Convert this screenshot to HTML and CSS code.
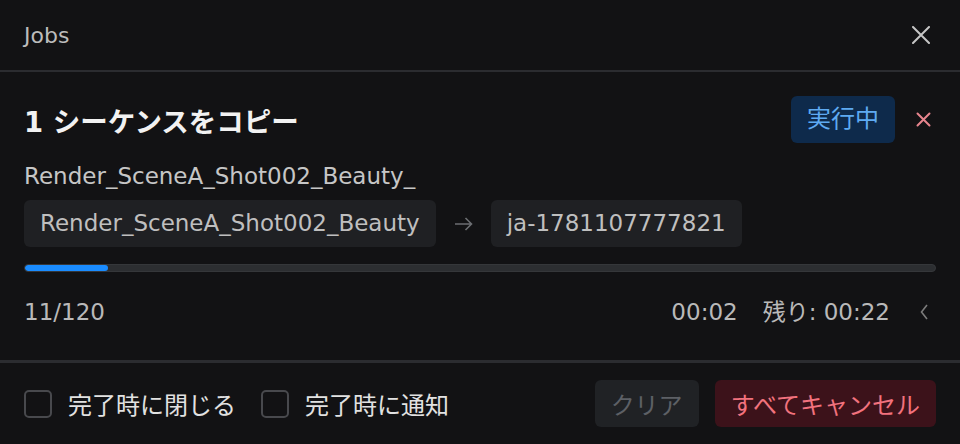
FILE: index.html
```html
<!DOCTYPE html>
<html lang="ja">
<head>
	<meta charset="UTF-8">
	<title>Jobs</title>
	<link rel="stylesheet" href="styles.css">
</head>
<body>
<div class="panel">
	<header class="head">
		<span class="head-title">Jobs</span>
		<button class="icon-btn close-btn">
			<svg width="18" height="18" viewBox="0 0 18 18"><path d="M1 1L17 17M17 1L1 17" stroke="currentColor" stroke-width="2" fill="none" stroke-linecap="round"/></svg>
		</button>
	</header>
	<section class="job">
		<div class="job-top">
			<h2 class="job-title">1 シーケンスをコピー</h2>
			<div class="job-status">
				<span class="badge">実行中</span>
				<button class="icon-btn cancel-btn">
					<svg width="15" height="15" viewBox="0 0 15 15"><path d="M1.5 1.5L13.5 13.5M13.5 1.5L1.5 13.5" stroke="currentColor" stroke-width="2" fill="none" stroke-linecap="round"/></svg>
				</button>
			</div>
		</div>
		<div class="job-name">Render_SceneA_Shot002_Beauty_</div>
		<div class="rename">
			<span class="chip">Render_SceneA_Shot002_Beauty</span>
			<svg class="arrow" width="19" height="14" viewBox="0 0 19 14"><path d="M1 7H17.5M11.5 1L17.5 7L11.5 13" stroke="currentColor" stroke-width="1.6" fill="none"/></svg>
			<span class="chip">ja-1781107777821</span>
		</div>
		<div class="progress"><div class="progress-fill" style="width: 9.17%"></div></div>
		<div class="stats">
			<span>11/120</span>
			<div class="times">
				<span>00:02</span>
				<span>残り: 00:22</span>
				<svg class="chevron" width="8" height="16" viewBox="0 0 8 16"><path d="M7 1L1.5 8L7 15" stroke="currentColor" stroke-width="1.6" fill="none"/></svg>
			</div>
		</div>
	</section>
	<footer class="foot">
		<div class="opts">
			<label class="opt"><span class="box"></span>完了時に閉じる</label>
			<label class="opt"><span class="box"></span>完了時に通知</label>
		</div>
		<div class="actions">
			<button class="btn btn-clear">クリア</button>
			<button class="btn btn-danger">すべてキャンセル</button>
		</div>
	</footer>
</div>
</body>
</html>
```
FILE: styles.css
```css
*{
	margin: 0;
	padding: 0;
	box-sizing: border-box;
}
body{
	background: #121214;
	font-family: "DejaVu Sans", "Noto Sans CJK JP", sans-serif;
	font-size: 23px;
	color: #c4c4c4;
}
button{
	font-family: inherit;
	font-size: inherit;
	border: none;
	background: none;
	cursor: pointer;
}
.panel{
	width: 960px;
	height: 444px;
}

/* header */
.head{
	height: 72px;
	padding: 0 30px 0 24px;
	display: flex;
	align-items: center;
	justify-content: space-between;
	border-bottom: 2px solid #2b2c30;
}
.head-title{
	font-size: 22px;
	color: #bcbcbc;
}
.icon-btn{
	display: flex;
	align-items: center;
	justify-content: center;
}
.close-btn{
	color: #c6c6c6;
}
.cancel-btn{
	color: #e7858e;
}

/* job card */
.job{
	padding: 24px 24px 31px;
	border-bottom: 3px solid #2b2c30;
}
.job-top{
	display: flex;
	align-items: center;
	justify-content: space-between;
}
.job-title{
	font-size: 27.5px;
	font-weight: bold;
	color: #f2f2f2;
}
.job-status{
	display: flex;
	align-items: center;
	gap: 21px;
	padding-right: 5px;
}
.badge{
	height: 47px;
	line-height: 47px;
	padding: 0 16px;
	border-radius: 6px;
	background: #0e2a4b;
	color: #5eaaf2;
	font-size: 24px;
}
.job-name{
	margin-top: 16px;
	line-height: 34px;
	color: #c6c6c6;
}
.rename{
	margin-top: 7px;
	display: flex;
	align-items: center;
	gap: 18px;
}
.chip{
	height: 47px;
	line-height: 47px;
	padding: 0 16px;
	border-radius: 6px;
	background: #1f2023;
	color: #bfbfbf;
}
.arrow{
	color: #6c6e72;
}
.progress{
	margin-top: 17px;
	height: 8px;
	border-radius: 4px;
	background: #2c2e31;
	border: 1px solid #35373a;
	overflow: hidden;
}
.progress-fill{
	height: 100%;
	background: #1a8cff;
	border-radius: 4px;
}
.stats{
	margin-top: 23px;
	line-height: 34px;
	display: flex;
	justify-content: space-between;
	align-items: center;
	color: #b9b9b9;
}
.times{
	display: flex;
	align-items: center;
	gap: 25px;
}
.chevron{
	margin-left: 5px;
	margin-right: 8px;
	color: #7c7c7c;
}

/* footer */
.foot{
	padding: 17px 24px;
	display: flex;
	align-items: center;
	justify-content: space-between;
	font-size: 24px;
}
.opts{
	display: flex;
	align-items: center;
	gap: 25px;
}
.opt{
	display: flex;
	align-items: center;
	gap: 16px;
	color: #e2e2e2;
}
.box{
	width: 28px;
	height: 28px;
	border: 2px solid #48494d;
	border-radius: 5px;
}
.actions{
	display: flex;
	gap: 16px;
}
.btn{
	height: 47px;
	padding: 0 16px;
	border-radius: 6px;
}
.btn-clear{
	background: #202225;
	color: #5d6065;
}
.btn-danger{
	background: #3c121a;
	color: #f2727e;
}
```
